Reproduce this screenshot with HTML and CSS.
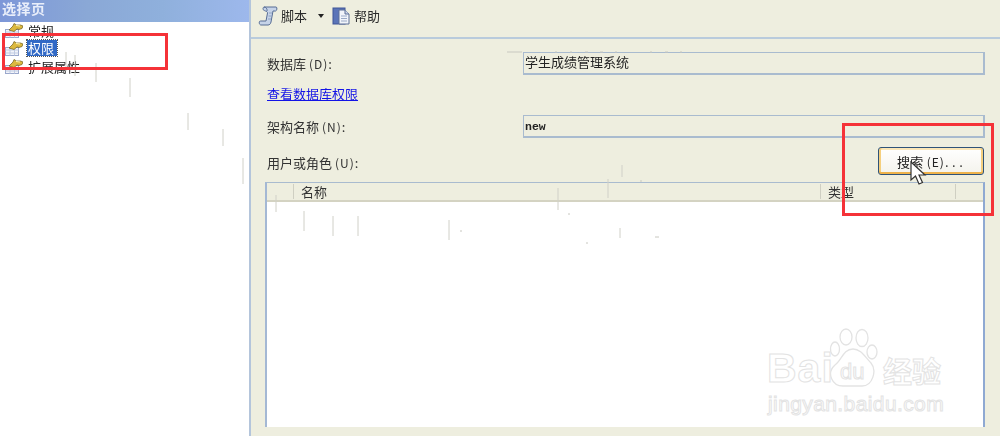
FILE: index.html
```html
<!DOCTYPE html>
<html lang="zh-CN">
<head>
<meta charset="utf-8">
<title>架构属性</title>
<link rel="stylesheet" href="styles.css">
</head>
<body>
<div class="window">
  <aside class="side">
    <div class="side-title">选择页</div>
    <ul class="tree">
      <li class="tree-item">
        <svg class="page-icon" viewBox="0 0 18 15"><use href="#page"/></svg><span class="tree-text">常规</span>
      </li>
      <li class="tree-item">
        <svg class="page-icon" viewBox="0 0 18 15"><use href="#page"/></svg><span class="tree-text selected">权限</span>
      </li>
      <li class="tree-item">
        <svg class="page-icon" viewBox="0 0 18 15"><use href="#page"/></svg><span class="tree-text">扩展属性</span>
      </li>
    </ul>
  </aside>
  <main class="main">
    <div class="toolbar">
      <div class="tool">
        <svg class="tool-icon" viewBox="0 0 20 20">
          <path d="M6 1H18c1.500 0 1 4-.5 4H15L13 16c-.4 2-1.500 3-3 3H3c-2 0-2.500-4-.5-4H8L9.500 7C10 5 5 5 5 3c0-1 .5-2 1-2z" fill="#c6d3e8" stroke="#566c94" stroke-width="1"/>
          <path d="M11 7h3M10.500 10h3M10 13h3" stroke="#8ea2c2" stroke-width="1" fill="none"/>
          <path d="M6 1c2 0 3.500 2 3 4" stroke="#566c94" fill="none"/>
        </svg>
        <span>脚本</span>
        <span class="caret"></span>
      </div>
      <div class="tool tool-help">
        <svg class="tool-icon help-icon" viewBox="0 0 18 18">
          <rect x="1" y="1" width="12" height="16" fill="#5b74b8" stroke="#3f5597"/>
          <path d="M7 3h6l4 4v10H7z" fill="#f1f4fa" stroke="#5d6f96"/>
          <path d="M13 3v4h4" fill="#cfd8ea" stroke="#5d6f96"/>
          <path d="M9 9h6M9 11.500h6M9 14h6" stroke="#9aa9c6"/>
        </svg>
        <span>帮助</span>
      </div>
    </div>
    <div class="form">
      <div class="row">
        <label class="label">数据库 <span class="key">(D)</span>:</label>
        <div class="field">学生成绩管理系统</div>
      </div>
      <a class="link" href="#">查看数据库权限</a>
      <div class="row">
        <label class="label">架构名称 <span class="key">(N)</span>:</label>
        <div class="field mono">new</div>
      </div>
      <div class="users-row">
        <label class="label">用户或角色 <span class="key">(U)</span>:</label>
        <button class="search-btn" type="button">搜索 <span class="key">(E)</span>. . .</button>
      </div>
      <div class="table">
        <div class="thead">
          <div class="th th-icon"></div>
          <div class="th th-name">名称</div>
          <div class="th th-type">类型</div>
          <div class="th th-end"></div>
        </div>
        <div class="tbody"></div>
      </div>
    </div>
  </main>
</div>

<svg class="defs" width="0" height="0">
  <defs>
    <g id="page">
      <rect x=".5" y="6.500" width="13" height="8" fill="#f2f4fa" stroke="#9aa8cc"/>
      <path d="M.5 9h13M.5 12h13M5 6.500v8M9.500 6.500v8" stroke="#c0cbe2"/>
      <path d="M4 7l4-4 1-2.500 2.500 1.500h4L18 3l-1 2.500-3 1-2-.5-3 2.500z" fill="#dcb93f" stroke="#6f5c18" stroke-width=".7"/>
      <path d="M11 2.500l4 .5" stroke="#fff4b0"/>
    </g>
  </defs>
</svg>

<svg class="noise" width="1000" height="436" viewBox="0 0 1000 436">
  <path d="M66 52v19M75 55v21M96 63v19M130 78v19M188 113v17M223 129v17M243 158v26M276 195v17M304 211v20M333 216v20M358 216v20M449 220v20M558 188v22M608 179v19M620 228v10M622 165v12" stroke="#d0d0c8" fill="none"/>
  <path d="M507 52h15M555 52h2M570 52h2M585 52h3M600 52h3M615 52h2M650 52h2M665 52h3M680 52h2M640 181h2M655 237h4M586 243h2M568 214h2M460 231h2" stroke="#c8c8c0" fill="none"/>
</svg>

<div class="callout callout-tree"></div>
<div class="callout callout-search"></div>

<svg class="cursor" width="20" height="26" viewBox="0 0 20 26">
  <path d="M2 1v18l4.500-4 3.500 8 3.500-1.500-3.500-7.500h6z" fill="#fff" stroke="#333" stroke-width="1.200"/>
</svg>

<div class="watermark">
  <svg class="paw" width="50" height="60" viewBox="0 0 50 60">
    <g fill="#fff" stroke="#e3e3e3" stroke-width="1.300">
      <ellipse cx="17" cy="9" rx="6" ry="8"/>
      <ellipse cx="33" cy="10" rx="6" ry="8.500"/>
      <ellipse cx="6" cy="21" rx="4.500" ry="7"/>
      <ellipse cx="43" cy="24" rx="5" ry="7"/>
      <path d="M24 21c8 0 12 8 18 14 6 7 2 23-9 23H14C3 58-3 45 6 37c7-5 8-16 18-16z"/>
    </g>
  </svg>
  <span class="wm-bai">Bai</span>
  <span class="wm-du">du</span>
  <span class="wm-cn">经验</span>
  <span class="wm-url">jingyan.baidu.com</span>
</div>
</body>
</html>
```
FILE: styles.css
```css
html, body {
  margin: 0;
  padding: 0;
  width: 1000px;
  height: 436px;
  overflow: hidden;
  background: #eeeedf;
  font-family: "Noto Sans CJK SC", "Liberation Sans", sans-serif;
  font-size: 13px;
  color: #2a2a2a;
}

.window {
  display: grid;
  grid-template-columns: 251px 1fr;
  height: 436px;
  filter: blur(0.45px);
}

.side {
  background: #fff;
  border-right: 2px solid #b4c5db;
}

.side-title {
  height: 22px;
  line-height: 17px;
  padding-left: 2px;
  color: #e9eefa;
  font-size: 14px;
  letter-spacing: 0.5px;
  font-weight: 700;
  background: linear-gradient(90deg, #7d97d8 0%, #8aa8d6 35%, #8fb0dc 65%, #9db8ec 100%);
}

.tree {
  list-style: none;
  margin: 0;
  padding: 0 0 0 5px;
}

.tree-item {
  display: flex;
  align-items: center;
  height: 18px;
  font-size: 13px;
  color: #222;
}

.tree-item:first-child {
  height: 17px;
}

.tree-item:last-child {
  height: 19px;
}

.page-icon {
  width: 18px;
  height: 15px;
  flex: none;
}

.tree-text {
  margin-left: 5px;
  line-height: 16px;
}

.selected {
  margin-left: 4px;
  padding: 0 3px 0 1px;
  background: #3169c6;
  color: #fff;
  outline: 1px dotted #555;
}

.main {
  display: flex;
  flex-direction: column;
  min-width: 0;
}

.toolbar {
  display: flex;
  align-items: center;
  gap: 8px;
  height: 31px;
  padding: 0 0 6px 7px;
  border-bottom: 2px solid #b9cbdc;
  font-size: 13px;
}

.tool {
  display: flex;
  align-items: center;
  gap: 3px;
}

.tool-help {
  gap: 4px;
}

.tool-icon {
  width: 20px;
  height: 20px;
  flex: none;
}

.help-icon {
  width: 18px;
  height: 18px;
}

.caret {
  width: 0;
  height: 0;
  margin-left: 8px;
  border: 3px solid transparent;
  border-top: 4px solid #222;
  border-bottom: 0;
}

.form {
  flex: 1;
  display: flex;
  flex-direction: column;
  padding: 13px 15px 9px 16px;
  min-height: 0;
}

.row {
  display: flex;
  align-items: center;
  height: 23px;
}

.label {
  width: 256px;
  flex: none;
  font-size: 13px;
  color: #333;
}

.key {
  font-size: 12px;
  letter-spacing: 1px;
}

.field {
  flex: 1;
  height: 20px;
  line-height: 18px;
  padding-left: 1px;
  border: 1px solid #a9bbcf;
  border-width: 1px 2px 2px 1px;
  font-size: 13px;
  color: #222;
}

.mono {
  font-family: "Liberation Mono", monospace;
  font-size: 11.500px;
  line-height: 22px;
  font-weight: 700;
}

.link {
  margin: 9px 0 11px;
  height: 20px;
  line-height: 20px;
  color: #1414e6;
  text-decoration: underline;
  font-size: 13px;
}

.users-row {
  display: flex;
  align-items: flex-end;
  justify-content: space-between;
  height: 28px;
  margin-top: 9px;
}

.users-row .label {
  height: 20px;
  line-height: 16px;
}

.search-btn {
  width: 106px;
  height: 28px;
  margin-right: 1px;
  padding: 0 2px 0 0;
  border: 1px solid #2f5378;
  border-radius: 3px;
  background: linear-gradient(#fff, #f4f3ec);
  box-shadow: inset 0 -2px 0 #eeb24a, inset 2px 0 0 #f5cf7e, inset -2px 0 0 #f5cf7e, inset 0 2px 0 #fbe7b8;
  font-family: inherit;
  font-size: 13px;
  letter-spacing: 0.3px;
  color: #222;
}

.table {
  flex: 1;
  margin-top: 7px;
  margin-left: -2px;
  border: 1px solid #a9bbcf;
  border-width: 1px 2px 0 2px;
  border-left-color: #a4b8d4;
  border-right-color: #8fa9d2;
  display: flex;
  flex-direction: column;
  min-height: 0;
}

.thead {
  display: flex;
  align-items: center;
  height: 17px;
  flex: none;
  background: #eeeedf;
  border-bottom: 2px solid #d4d3c2;
  font-size: 13px;
  color: #333;
}

.th {
  height: 15px;
  line-height: 15px;
  box-sizing: border-box;
  border-left: 1px solid #cfcfc2;
  padding-left: 7px;
}

.th-icon {
  width: 26px;
  border-left: 0;
}

.th-name {
  width: 527px;
}

.th-type {
  width: 135px;
}

.th-end {
  flex: 1;
}

.tbody {
  flex: 1;
  background: #fff;
}

.defs {
  position: absolute;
}

.noise {
  position: absolute;
  left: 0;
  top: 0;
  pointer-events: none;
}

.callout {
  position: absolute;
  box-sizing: border-box;
  border: 3px solid #f53238;
}

.callout-tree {
  left: 2px;
  top: 33px;
  width: 166px;
  height: 37px;
}

.callout-search {
  left: 842px;
  top: 123px;
  width: 152px;
  height: 93px;
}

.cursor {
  position: absolute;
  left: 909px;
  top: 161px;
}

.watermark {
  position: absolute;
  left: 760px;
  top: 325px;
  width: 220px;
  height: 95px;
  color: #fff;
  -webkit-text-stroke: 1px #e3e3e3;
  font-family: "Liberation Sans", sans-serif;
}

.paw {
  position: absolute;
  left: 69px;
  top: 3px;
}

.wm-bai {
  position: absolute;
  left: 7px;
  top: 20px;
  font-size: 41px;
  line-height: 46px;
  letter-spacing: 1px;
  font-weight: 700;
}

.wm-du {
  position: absolute;
  left: 80px;
  top: 34px;
  font-size: 22px;
  line-height: 26px;
}

.wm-cn {
  position: absolute;
  left: 123px;
  top: 26px;
  font-family: "Noto Sans CJK SC", sans-serif;
  font-size: 29px;
  line-height: 38px;
  font-weight: 700;
}

.wm-url {
  position: absolute;
  left: 8px;
  top: 66px;
  font-size: 21px;
  line-height: 26px;
  letter-spacing: 0.4px;
}
```
